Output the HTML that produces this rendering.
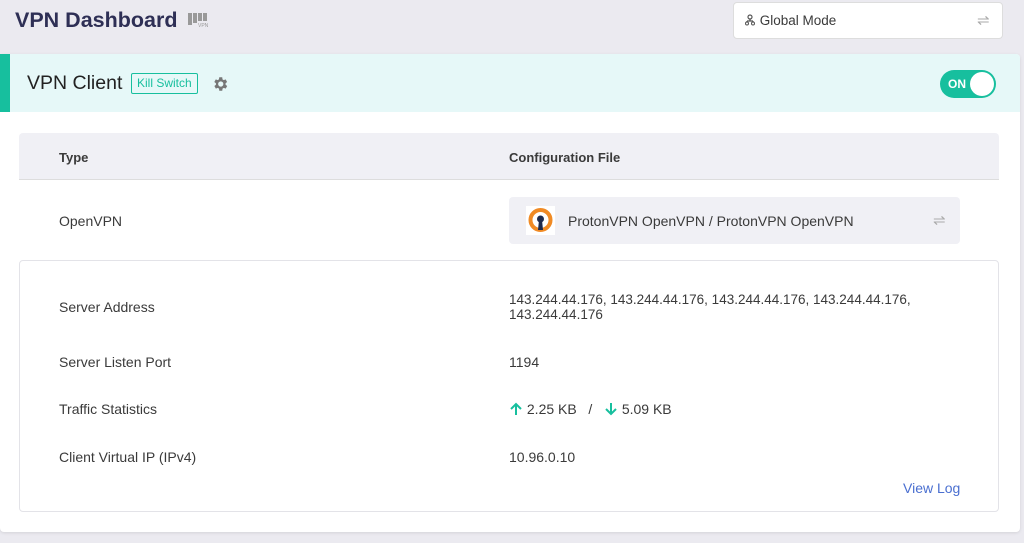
<!DOCTYPE html>
<html><head><style>
*{box-sizing:border-box;margin:0;padding:0}
body{width:1024px;height:543px;background:#ebeaf0;font-family:"Liberation Sans",sans-serif;color:#3a3a3a;position:relative;overflow:hidden;font-size:14px}
.abs{position:absolute}
</style></head><body>
<div class="abs" style="left:15px;top:8px;font-size:21.5px;font-weight:bold;color:#2e2f55">VPN Dashboard</div>
<div class="abs" style="left:188px;top:12px;width:20px;height:14px">
<svg width="20" height="16"><rect x="0" y="1" width="4" height="12" fill="#999"/><rect x="5" y="1" width="4" height="10" fill="#999"/><rect x="10" y="1" width="4" height="8" fill="#999"/><rect x="15" y="1" width="4" height="8" fill="#999"/><text x="10" y="15" font-size="5" fill="#999" font-family="Liberation Sans">VPN</text></svg></div>
<div class="abs" style="left:733px;top:2px;width:270px;height:37px;background:#fff;border:1px solid #ddd;border-radius:4px"></div>
<div class="abs" style="left:744px;top:13px;font-size:13.5px">
<svg width="12" height="12" viewBox="0 0 12 12" style="vertical-align:-1px"><circle cx="6" cy="3" r="2" fill="none" stroke="#555" stroke-width="1.2"/><path d="M6 5v2M3 7h6M3 7v1M9 7v1" stroke="#555" stroke-width="1.2"/><circle cx="3" cy="9.5" r="1.5" fill="none" stroke="#555"/><circle cx="9" cy="9.5" r="1.5" fill="none" stroke="#555"/></svg> Global Mode</div>
<div class="abs" style="left:977px;top:11px;color:#aaa;font-size:15px">⇌</div>
<div class="abs" style="left:0;top:54px;width:1020px;height:478px;background:#fff;border-radius:4px;box-shadow:0 1px 3px rgba(0,0,0,.1)"></div>
<div class="abs" style="left:0;top:54px;width:1020px;height:58px;background:#e6f8f8;border-radius:4px 4px 0 0"></div>
<div class="abs" style="left:0;top:54px;width:10px;height:58px;background:#17bf9e"></div>
<div class="abs" style="left:27px;top:72px;font-size:19.5px;color:#222">VPN Client</div>
<div class="abs" style="left:131px;top:73px;height:21px;padding:0 5px;border:1px solid #17bf9e;border-radius:2px;color:#17bf9e;font-size:12px;line-height:19px">Kill Switch</div>
<div class="abs" style="left:211px;top:75px"><svg width="18" height="18" viewBox="0 0 24 24"><path fill="#777" d="M19.4 13a7.5 7.5 0 000-2l2.1-1.6-2-3.5-2.5 1a7.6 7.6 0 00-1.7-1L15 3h-4l-.4 2.9a7.6 7.6 0 00-1.7 1l-2.5-1-2 3.5L6.6 11a7.5 7.5 0 000 2l-2.1 1.6 2 3.5 2.5-1a7.6 7.6 0 001.7 1L11 21h4l.4-2.9a7.6 7.6 0 001.7-1l2.5 1 2-3.5zM13 15.5a3.5 3.5 0 110-7 3.5 3.5 0 010 7z"/></svg></div>
<div class="abs" style="left:940px;top:70px;width:56px;height:28px;background:#17bf9e;border-radius:14px"></div>
<div class="abs" style="left:948px;top:77px;color:#fff;font-weight:bold;font-size:12px">ON</div>
<div class="abs" style="left:970px;top:72px;width:24px;height:24px;background:#fff;border-radius:50%"></div>
<div class="abs" style="left:19px;top:133px;width:980px;height:47px;background:#f0f0f5;border-bottom:1px solid #ddd;border-radius:4px 4px 0 0"></div>
<div class="abs" style="left:59px;top:150px;font-weight:bold;font-size:13px">Type</div>
<div class="abs" style="left:509px;top:150px;font-weight:bold;font-size:13px">Configuration File</div>
<div class="abs" style="left:59px;top:213px">OpenVPN</div>
<div class="abs" style="left:509px;top:197px;width:451px;height:47px;background:#f0f0f5;border-radius:4px"></div>
<div class="abs" style="left:526px;top:206px;width:29px;height:29px;background:#fff"><svg width="29" height="29" viewBox="0 0 29 29"><circle cx="14.5" cy="14" r="10" fill="none" stroke="#f08a24" stroke-width="4"/><circle cx="14.5" cy="13" r="3.5" fill="#1d2a4d"/><path d="M13 14h3l1 10h-5z" fill="#1d2a4d"/></svg></div>
<div class="abs" style="left:568px;top:213px">ProtonVPN OpenVPN / ProtonVPN OpenVPN</div>
<div class="abs" style="left:933px;top:211px;color:#aaa;font-size:15px">⇌</div>
<div class="abs" style="left:19px;top:260px;width:980px;height:252px;border:1px solid #e3e3e8;border-radius:4px"></div>
<div class="abs" style="left:59px;top:299px">Server Address</div>
<div class="abs" style="left:509px;top:292px;line-height:15px;font-size:13.5px">143.244.44.176, 143.244.44.176, 143.244.44.176, 143.244.44.176,<br>143.244.44.176</div>
<div class="abs" style="left:59px;top:354px">Server Listen Port</div>
<div class="abs" style="left:509px;top:354px">1194</div>
<div class="abs" style="left:59px;top:401px">Traffic Statistics</div>
<div class="abs" style="left:509px;top:401px;white-space:nowrap"><svg width="14" height="14" viewBox="0 0 14 14" style="vertical-align:-2px"><path d="M7 13V2M2 7l5-5 5 5" fill="none" stroke="#17bf9e" stroke-width="2"/></svg> 2.25 KB &nbsp; / &nbsp; <svg width="14" height="14" viewBox="0 0 14 14" style="vertical-align:-2px"><path d="M7 1v11M2 7l5 5 5-5" fill="none" stroke="#17bf9e" stroke-width="2"/></svg> 5.09 KB</div>
<div class="abs" style="left:59px;top:449px">Client Virtual IP (IPv4)</div>
<div class="abs" style="left:509px;top:449px">10.96.0.10</div>
<div class="abs" style="left:903px;top:480px;color:#4a6fd0">View Log</div>
</body></html>
